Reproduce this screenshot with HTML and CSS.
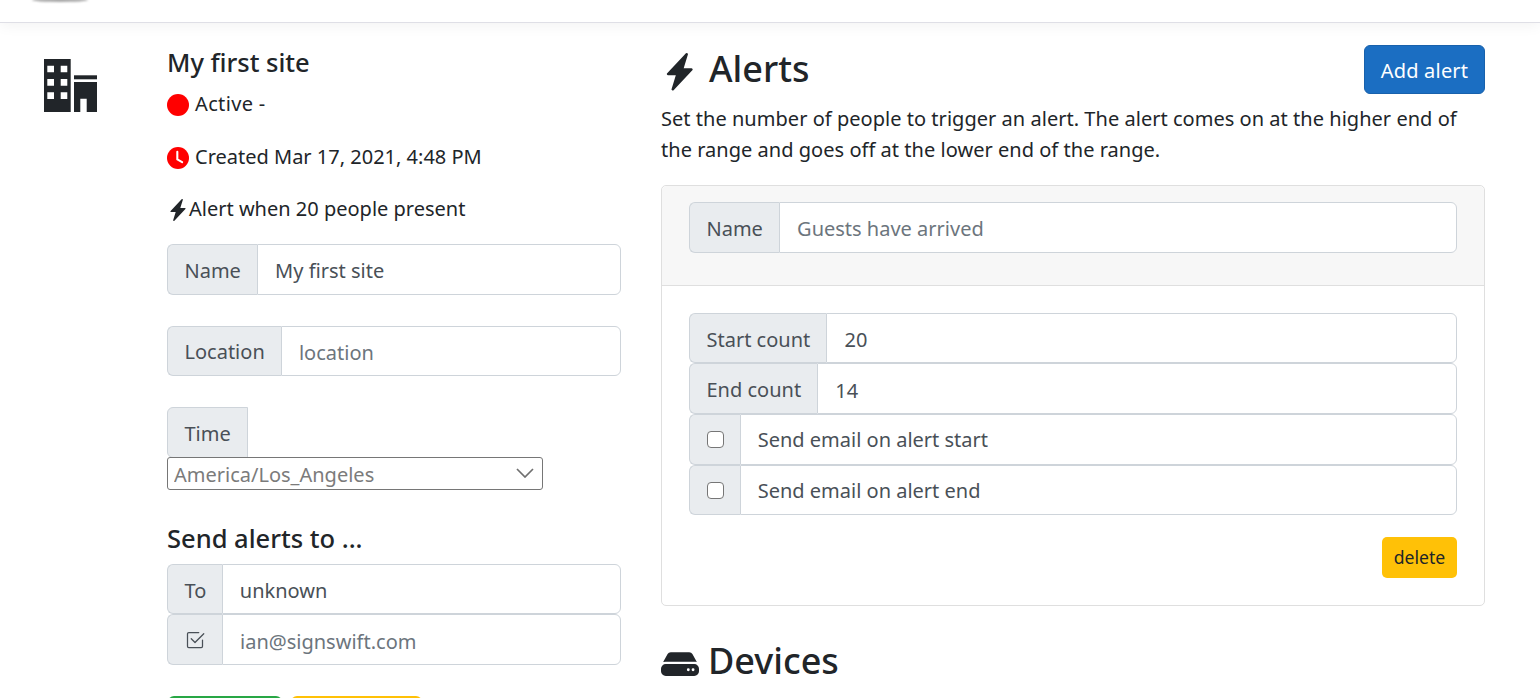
FILE: index.html
```html
<!DOCTYPE html>
<html lang="en">
<head>
<meta charset="utf-8">
<title>My first site</title>
<link rel="stylesheet" href="styles.css">
</head>
<body>
<header class="topbar"><div class="logo-remnant"></div></header>
<main class="page">
  <div class="site-icon">
    <svg class="building" viewBox="0 0 53 53" fill="#212529"><path fill-rule="evenodd" d="M0 0h26.7v53H0zM3.3 6.7v6.6H10V6.7zM16.7 6.7v6.6h6.6V6.7zM3.3 20v6.7H10V20zM16.7 20v6.7h6.6V20zM3.3 33.3V40H10v-6.7zM16.7 33.3V40h6.6v-6.7z"/><path d="M30 16.3h23v4H30z"/><path d="M30 23h23v30H42.700V39.700H36.300V53H30z"/></svg>
  </div>
  <section class="site-col">
    <h2 class="site-title">My first site</h2>
    <p class="status first"><span class="dot"></span> Active -</p>
    <p class="status"><svg class="clock" viewBox="0 0 16 16"><circle cx="8" cy="8" r="8" fill="#f00"/><path d="M7.500 3.500V9l3.500 2" fill="none" stroke="#fff" stroke-width="1.500" stroke-linecap="round" stroke-linejoin="round"/></svg> Created Mar 17, 2021, 4:48 PM</p>
    <p class="status alert-line"><svg class="bolt-small" viewBox="0 0 16 16" fill="#212529"><path d="M11.251.068a.5.5 0 0 1 .227.58L9.677 6.500H13a.5.5 0 0 1 .364.843l-8 8.500a.5.5 0 0 1-.842-.49L6.323 9.500H3a.5.5 0 0 1-.364-.843l8-8.500a.5.5 0 0 1 .615-.09z"/></svg>Alert when 20 people present</p>

    <div class="group spaced"><span class="addon">Name</span><input class="field" value="My first site"></div>
    <div class="group spaced"><span class="addon">Location</span><input class="field" placeholder="location"></div>
    <div class="time-block">
      <span class="addon time-label">Time</span>
      <div class="select-wrap">
        <select class="tz"><option>America/Los_Angeles</option></select>
        <svg class="chevron" viewBox="0 0 18 10" fill="none" stroke="#6f6f6f" stroke-width="1.700"><path d="M1 1l8 8 8-8"/></svg>
      </div>
    </div>
    <h3 class="send-title">Send alerts to ...</h3>
    <div class="group"><span class="addon addon-to">To</span><input class="field" value="unknown"></div>
    <div class="group"><span class="addon icon-addon"><svg class="check" viewBox="0 0 16 16" fill="#495057"><path d="M3 14.500A1.500 1.500 0 0 1 1.500 13V3A1.500 1.500 0 0 1 3 1.500h8a.5.5 0 0 1 0 1H3a.5.5 0 0 0-.5.5v10a.5.5 0 0 0 .5.5h10a.5.5 0 0 0 .5-.5V8a.5.5 0 0 1 1 0v5a1.500 1.500 0 0 1-1.500 1.500H3z"/><path d="m8.354 10.354 7-7a.5.5 0 0 0-.708-.708L8 9.293 5.354 6.646a.5.5 0 1 0-.708.708l3 3a.5.5 0 0 0 .708 0z"/></svg></span><input class="field" placeholder="ian@signswift.com"></div>
    <div class="actions"><button class="btn-green" aria-label="Save"></button><button class="btn-yellow" aria-label="Cancel"></button></div>
  </section>
  <section class="alerts-col">
    <div class="alerts-head">
      <h1 class="big-title head-title"><svg class="bolt-big" viewBox="0 0 16 16" fill="#212529"><path d="M11.251.068a.5.5 0 0 1 .227.58L9.677 6.500H13a.5.5 0 0 1 .364.843l-8 8.500a.5.5 0 0 1-.842-.49L6.323 9.500H3a.5.5 0 0 1-.364-.843l8-8.500a.5.5 0 0 1 .615-.09z"/></svg>Alerts</h1>
      <button class="btn-add">Add alert</button>
    </div>
    <p class="intro">Set the number of people to trigger an alert. The alert comes on at the higher end of the range and goes off at the lower end of the range.</p>
    <div class="card">
      <div class="card-head">
        <div class="group"><span class="addon">Name</span><input class="field" placeholder="Guests have arrived"></div>
      </div>
      <div class="card-body">
        <div class="group"><span class="addon">Start count</span><input class="field" value="20"></div>
        <div class="group"><span class="addon">End count</span><input class="field" value="14"></div>
        <div class="group"><span class="addon"><input class="box" type="checkbox"></span><span class="field label-field">Send email on alert start</span></div>
        <div class="group"><span class="addon"><input class="box" type="checkbox"></span><span class="field label-field">Send email on alert end</span></div>
        <div class="card-actions"><button class="btn-delete">delete</button></div>
      </div>
    </div>
    <h1 class="big-title devices"><svg class="hdd" viewBox="0 0 16 16" fill="#212529"><path fill-rule="evenodd" d="M0 10a2 2 0 0 1 2-2h12a2 2 0 0 1 2 2v1a2 2 0 0 1-2 2H2a2 2 0 0 1-2-2v-1zm11.500 1a.6.6 0 1 0 0-1.200.6.6 0 0 0 0 1.200zm2 0a.6.6 0 1 0 0-1.200.6.6 0 0 0 0 1.200z"/><path d="M.91 7.204A2.993 2.993 0 0 1 2 7h12c.384 0 .752.072 1.090.204l-1.867-3.422A1.500 1.500 0 0 0 11.906 3H4.094a1.500 1.500 0 0 0-1.317.782L.91 7.204z"/></svg>Devices</h1>
  </section>
</main>
</body>
</html>
```
FILE: styles.css
```css
* { box-sizing: border-box; }
html, body { margin: 0; height: 698px; overflow: hidden; background: #fff; }
body { font-family: "Noto Sans", "Open Sans", sans-serif; font-size: 20px; line-height: 31px; color: #212529; }

.topbar { height: 23px; border-bottom: 1px solid #dfdfe6; box-shadow: 0 3px 14px rgba(0,0,0,.05); overflow: hidden; }
.logo-remnant { width: 56px; height: 4px; margin: -2px 0 0 32px; background: #a8a8a8; border-radius: 50%; filter: blur(1px); }

.page { display: flex; padding-right: 55px; }
.site-icon { width: 167px; flex: none; padding: 36px 0 0 44px; }
.building { width: 53px; height: 53px; display: block; }

.site-col { width: 454px; flex: none; padding-top: 23.500px; }
.site-title { margin: 0; font-size: 25.500px; font-weight: 500; line-height: 31px; }
.status { margin: 22px 0 0; display: flex; align-items: center; gap: 6px; }
.status.first { margin-top: 10px; letter-spacing: .35px; }
.alert-line { gap: 0; margin: 21px 0 20.500px; }
.dot { width: 22px; height: 22px; margin-top: 4px; border-radius: 50%; background: #f00; flex: none; }
.clock { width: 22px; height: 22px; margin-top: 3px; flex: none; }
.bolt-small { width: 22px; height: 22px; margin-top: 3px; flex: none; }

.group { display: flex; height: 50.700px; }
.spaced { margin-bottom: 30.900px; }
.addon { display: flex; align-items: center; padding: 2px 16.200px 0 16.500px; background: #e9ecef; border: 1px solid #ced4da; border-right: 0; border-radius: 6px 0 0 6px; color: #495057; white-space: nowrap; flex: none; }
.addon-to { padding-right: 15.500px; }
.field { flex: 1; min-width: 0; padding: 3px 17px 0; font: inherit; color: #495057; background: #fff; border: 1px solid #ced4da; border-radius: 0 6px 6px 0; outline: none; }
.field::placeholder { color: #6c757d; opacity: 1; }
.label-field { display: flex; align-items: center; padding-top: 1px; }
.icon-addon { width: 55px; padding: 0 0 0 17px; }
.check { width: 20px; height: 20px; }
.box { appearance: none; width: 17px; height: 17px; margin: 0 0 2px; background: #fff; border: 1px solid #767676; border-radius: 4px; }

.time-block { display: flex; flex-direction: column; align-items: flex-start; }
.time-label { height: 50.500px; border-right: 1px solid #ced4da; border-radius: 6px 0 0 6px; }
.select-wrap { position: relative; width: 376px; margin-top: -1px; }
.tz { appearance: none; display: block; width: 100%; height: 33px; padding: 3px 6px 0; font: inherit; line-height: 28px; color: #7b7b7b; background: #fff; border: 1px solid #767676; border-radius: 3px; outline: none; }
.chevron { position: absolute; right: 9px; top: 11px; width: 18px; height: 10px; }

.send-title { margin: 33.500px 0 9.500px; font-size: 25.500px; font-weight: 500; line-height: 31px; }
.actions { display: flex; gap: 9px; margin-top: 30.500px; padding-left: 1px; }
.actions button { height: 49px; border: 0; border-radius: 6px; }
.btn-green { width: 114px; background: #28a745; }
.btn-yellow { width: 131px; background: #ffc107; }

.alerts-col { flex: 1; margin-left: 40px; padding-top: 22px; }
.alerts-head { display: flex; justify-content: space-between; align-items: center; height: 49px; }
.big-title { margin: 0; display: flex; align-items: center; font-size: 36px; font-weight: 500; line-height: 46px; }
.head-title { padding-bottom: 2px; }
.bolt-big { width: 37.500px; height: 37.500px; margin: 7px 10.500px 0 0; flex: none; }
.btn-add { height: 49px; width: 121px; padding: 2px 0 0; font: inherit; letter-spacing: .2px; color: #fff; background: #1b6ec2; border: 1px solid #1861ac; border-radius: 6px; }
.intro { margin: 9px 0 20px; letter-spacing: .03px; }

.card { border: 1px solid #dfdfdf; border-radius: 5px; }
.card-head { padding: 16px 27px 32px; background: #f7f7f7; border-bottom: 1px solid #dfdfdf; border-radius: 5px 5px 0 0; }
.card-body { padding: 27px; }
.card-actions { display: flex; justify-content: flex-end; margin-top: 21.200px; }
.btn-delete { width: 75px; height: 41px; padding: 0; font-family: inherit; font-size: 17.600px; color: #212529; background: #ffc107; border: 0; border-radius: 5px; }

.devices { margin-top: 32px; }
.hdd { width: 38px; height: 38px; margin: 6px 9px 0 0; flex: none; }
```
